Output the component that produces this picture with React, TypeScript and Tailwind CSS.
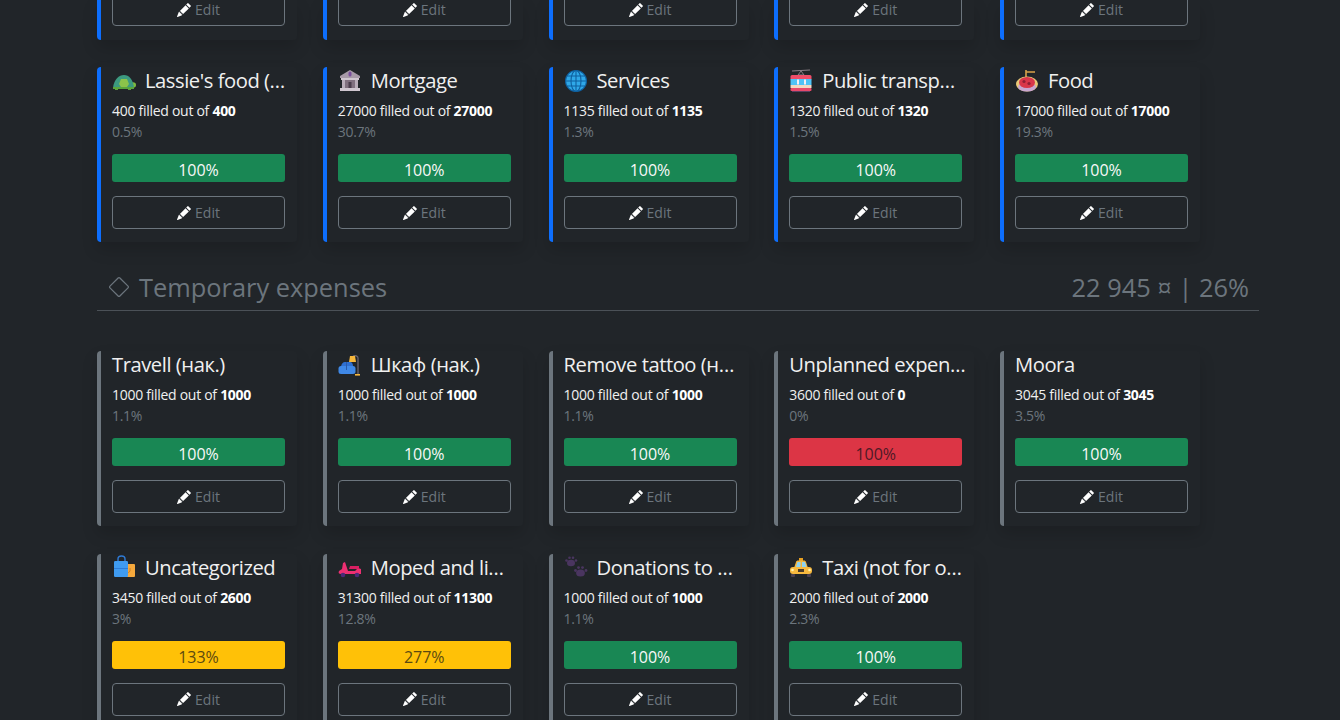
import React from "react";
import { BsDiamond, BsPencilFill } from "react-icons/bs";

type Budget = {
  title: string;
  icon?: React.ReactNode;
  filled: number;
  total: number;
  share: string;
  pct: number;
  tone?: "ok" | "over" | "bad";
};

const Turtle = () => (
  <svg viewBox="0 0 24 24" className="w-full h-full">
    <ellipse cx="21" cy="16" rx="3" ry="2.800" fill="#7dbb3f" />
    <path d="M3 18h3v3H3zM16 18h3v3h-3z" fill="#5ea63a" />
    <path d="M1 19C2 10 7 6 12 6s9 4 10 13z" fill="#3c9a80" />
    <path d="M7 15l2-5h6l2 5-2 3H9z" fill="#8bc34a" />
    <path d="M1 18h21v2H1z" fill="#5aa53c" />
  </svg>
);

const Bank = () => (
  <svg viewBox="0 0 24 24" className="w-full h-full">
    <path d="M12 1l10 6v2H2V7z" fill="#a79aa8" />
    <rect x="10.500" y="2.500" width="3" height="5" rx="1.500" fill="#7a4f9c" />
    <rect x="3" y="9" width="18" height="2" fill="#cfc6cf" />
    <rect x="7" y="11" width="10" height="8" fill="#80707f" />
    <rect x="4" y="11" width="3" height="8" fill="#b9adb9" />
    <rect x="17" y="11" width="3" height="8" fill="#b9adb9" />
    <rect x="10.500" y="13" width="3" height="6" fill="#4a3d4c" />
    <rect x="2" y="19" width="20" height="3" fill="#cfc6cf" />
  </svg>
);

const Globe = () => (
  <svg viewBox="0 0 24 24" className="w-full h-full" fill="none">
    <circle cx="12" cy="12" r="10.500" fill="#2fa8e8" />
    <g stroke="#0f5f9e" strokeWidth="1.100">
      <circle cx="12" cy="12" r="10.500" />
      <ellipse cx="12" cy="12" rx="5" ry="10.500" />
      <path d="M12 1.500v21M1.500 12h21M3 7h18M3 17h18" />
    </g>
  </svg>
);

const Tram = () => (
  <svg viewBox="0 0 24 24" className="w-full h-full">
    <path d="M3 2l18-1" stroke="#8a7f86" strokeWidth="1.200" />
    <path d="M12 2l-3 4h6z" fill="none" stroke="#8a7f86" strokeWidth="1" />
    <rect x="1.500" y="6" width="21" height="5" rx="1.500" fill="#ef4d68" />
    <rect x="1.500" y="10" width="21" height="6" fill="#4fc3f7" />
    <rect x="8" y="10.500" width="2" height="5" fill="#f5f0f5" />
    <rect x="15" y="10.500" width="2" height="5" fill="#f5f0f5" />
    <rect x="1.500" y="16" width="21" height="3" fill="#f2d8c2" />
    <rect x="1.500" y="19" width="21" height="3" rx="1" fill="#e8486a" />
    <rect x="3" y="22" width="18" height="1" fill="#5b3f63" />
  </svg>
);

const Pasta = () => (
  <svg viewBox="0 0 24 24" className="w-full h-full">
    <path d="M11 1v8M11 3h9" stroke="#d9a24a" strokeWidth="1.600" fill="none" />
    <ellipse cx="12" cy="15" rx="11" ry="7.500" fill="#e8c878" />
    <ellipse cx="12" cy="18" rx="9" ry="4.500" fill="#c9a6d0" />
    <ellipse cx="12" cy="13.500" rx="8" ry="5.500" fill="#d9364a" />
    <circle cx="9" cy="12.500" r="1.600" fill="#8f1f35" />
    <circle cx="14" cy="14.500" r="1.600" fill="#8f1f35" />
  </svg>
);

const Couch = () => (
  <svg viewBox="0 0 24 24" className="w-full h-full">
    <path d="M20 21V5c0-2-3-3-5-2" stroke="#6b6570" strokeWidth="1.300" fill="none" />
    <path d="M12 3h5l1 6h-7z" fill="#f6b73c" />
    <path d="M3 14c0-3 2-5 4-5h5c2 0 3 2 3 4v3H3z" fill="#2f6fd0" />
    <rect x="0.500" y="13" width="17" height="8" rx="2.500" fill="#3f88e6" />
    <rect x="8" y="9" width="1" height="8" fill="#2a5aa8" />
    <rect x="17" y="21" width="5" height="1.600" fill="#f6b73c" />
  </svg>
);

const Bag = () => (
  <svg viewBox="0 0 24 24" className="w-full h-full">
    <rect x="12" y="9" width="11" height="13" rx="1" fill="#f5a83c" />
    <path d="M18 13v3a2 2 0 01-3 1" stroke="#c97a22" strokeWidth="0.900" fill="none" />
    <path d="M6 7V4c0-4 7-4 7 0v3" stroke="#2f7bd6" strokeWidth="1.400" fill="none" />
    <rect x="2" y="6" width="14" height="16" rx="1.200" fill="#3f9bf0" />
    <rect x="2" y="13" width="14" height="1" fill="#2f7bd6" />
  </svg>
);

const Scooter = () => (
  <svg viewBox="0 0 24 24" className="w-full h-full">
    <path d="M5 8l2-1 3 9h7l3-3 3 1v5H3c-2 0-3-1-2-3l3-2z" fill="#ec2f72" />
    <path d="M12 11h9v3H11z" fill="#d81f62" />
    <circle cx="5" cy="20" r="2.300" fill="#4a2a78" />
    <circle cx="19" cy="20" r="2.300" fill="#4a2a78" />
  </svg>
);

const Paws = () => (
  <svg viewBox="0 0 24 24" className="w-full h-full" fill="#4a3560">
    <ellipse cx="7" cy="8" rx="4" ry="3.200" />
    <circle cx="2.500" cy="5.500" r="1.300" />
    <circle cx="5.500" cy="2.800" r="1.300" />
    <circle cx="9" cy="2.800" r="1.300" />
    <circle cx="12" cy="5.500" r="1.300" />
    <ellipse cx="16.500" cy="18" rx="4.400" ry="3.500" />
    <circle cx="11.500" cy="15.500" r="1.400" />
    <circle cx="14.500" cy="12.600" r="1.400" />
    <circle cx="18.500" cy="12.600" r="1.400" />
    <circle cx="22" cy="15.500" r="1.400" />
  </svg>
);

const Taxi = () => (
  <svg viewBox="0 0 24 24" className="w-full h-full">
    <rect x="10" y="3" width="4" height="3" fill="#e8a020" />
    <path d="M5 13l2-6c.3-1 1-1.500 2-1.500h6c1 0 1.700.5 2 1.500l2 6z" fill="#f4b63c" />
    <path d="M7 12l1.500-5h3v5zM13 7h3l1.500 5H13z" fill="#8fd3f0" />
    <rect x="1" y="12" width="22" height="7" rx="3" fill="#f7b93e" />
    <path d="M9 14h6v3H9z" fill="#4a3b2a" />
    <circle cx="3.500" cy="15" r="1.300" fill="#fff3b0" />
    <circle cx="20.500" cy="15" r="1.300" fill="#fff3b0" />
    <rect x="2" y="19" width="4" height="3" rx="1" fill="#4b4152" />
    <rect x="18" y="19" width="4" height="3" rx="1" fill="#4b4152" />
  </svg>
);

const regular: Budget[] = [
  { title: "Lassie's food (…", icon: <Turtle />, filled: 400, total: 400, share: "0.5%", pct: 100 },
  { title: "Mortgage", icon: <Bank />, filled: 27000, total: 27000, share: "30.7%", pct: 100 },
  { title: "Services", icon: <Globe />, filled: 1135, total: 1135, share: "1.3%", pct: 100 },
  { title: "Public transp…", icon: <Tram />, filled: 1320, total: 1320, share: "1.5%", pct: 100 },
  { title: "Food", icon: <Pasta />, filled: 17000, total: 17000, share: "19.3%", pct: 100 },
];

const temporary: Budget[] = [
  { title: "Travell (нак.)", filled: 1000, total: 1000, share: "1.1%", pct: 100 },
  { title: "Шкаф (нак.)", icon: <Couch />, filled: 1000, total: 1000, share: "1.1%", pct: 100 },
  { title: "Remove tattoo (н…", filled: 1000, total: 1000, share: "1.1%", pct: 100 },
  { title: "Unplanned expen…", filled: 3600, total: 0, share: "0%", pct: 100, tone: "bad" },
  { title: "Moora", filled: 3045, total: 3045, share: "3.5%", pct: 100 },
  { title: "Uncategorized", icon: <Bag />, filled: 3450, total: 2600, share: "3%", pct: 133, tone: "over" },
  { title: "Moped and li…", icon: <Scooter />, filled: 31300, total: 11300, share: "12.8%", pct: 277, tone: "over" },
  { title: "Donations to …", icon: <Paws />, filled: 1000, total: 1000, share: "1.1%", pct: 100 },
  { title: "Taxi (not for o…", icon: <Taxi />, filled: 2000, total: 2000, share: "2.3%", pct: 100 },
];

const EditButton = ({ className = "" }: { className?: string }) => (
  <div
    className={`h-[33px] rounded-[4px] border border-[#6c757d] flex items-center justify-center gap-[4px] text-[14px] text-[#6c757d] ${className}`}
  >
    <BsPencilFill className="text-white w-[14px] h-[14px]" />
    <span>Edit</span>
  </div>
);

// the row above is scrolled away, only its buttons still show
const CutOffCard = () => (
  <div className="w-[200px] h-[40px] rounded-b-[4px] border-l-4 border-[#0d6efd] pl-[11px] pr-[12px] shadow-[0_8px_16px_rgba(0,0,0,0.15)]">
    <EditButton className="-mt-[7px]" />
  </div>
);

const BudgetCard = ({ item, accent }: { item: Budget; accent: string }) => {
  const barColor =
    item.tone === "bad"
      ? "bg-[#dc3545] text-[#4d1a26]"
      : item.tone === "over"
        ? "bg-[#ffc107] text-[#5c4a10]"
        : "bg-[#198754] text-[#f8f8f8]";

  return (
    <div
      className={`w-[200px] h-[175px] rounded-[4px] border-l-4 ${accent} pl-[11px] pr-[12px] shadow-[0_8px_16px_rgba(0,0,0,0.15)]`}
    >
      <div className="flex items-center h-[27px] text-[20.2px] tracking-[-0.45px] leading-[27px] text-[#f0f0f0] whitespace-nowrap">
        {item.icon && (
          <span className="w-[24px] h-[24px] mr-[9px] shrink-0">{item.icon}</span>
        )}
        <span>{item.title}</span>
      </div>
      <div className="mt-[6px] text-[14px] tracking-[-0.28px] leading-[21px] text-[#f0f0f0]">
        {item.filled} filled out of <b className="font-bold text-white">{item.total}</b>
      </div>
      <div className="text-[14px] tracking-[-0.28px] leading-[21px] text-[#6c757d]">{item.share}</div>
      <div
        className={`mt-[12px] h-[28px] rounded-[3px] text-[16px] leading-[32px] text-center ${barColor}`}
      >
        {item.pct}%
      </div>
      <EditButton className="mt-[14px]" />
    </div>
  );
};

export default function App() {
  return (
    <div className="h-[720px] overflow-hidden bg-[#212529] font-['Open_Sans','Liberation_Sans',sans-serif]">
      <div className="pl-[97px] pr-[81px]">
        <div className="flex flex-wrap gap-x-[25.75px] gap-y-[27px]">
          {[1, 2, 3, 4, 5].map((n) => (
            <CutOffCard key={n} />
          ))}
          {regular.map((item) => (
            <BudgetCard key={item.title} item={item} accent="border-[#0d6efd]" />
          ))}
        </div>

        <div className="mt-[25px] h-[44px] pb-[2px] flex items-center justify-between border-b border-[#4b5157] pl-[12px] pr-[10px] text-[25.4px] text-[#6c757d]">
          <div className="flex items-center gap-[10px]">
            <BsDiamond className="w-[20px] h-[20px]" />
            <span>Temporary expenses</span>
          </div>
          <span>22 945 ¤ | 26%</span>
        </div>

        <div className="mt-[40px] flex flex-wrap gap-x-[25.75px] gap-y-[27.5px]">
          {temporary.map((item) => (
            <BudgetCard key={item.title} item={item} accent="border-[#6c757d]" />
          ))}
        </div>
      </div>
    </div>
  );
}
